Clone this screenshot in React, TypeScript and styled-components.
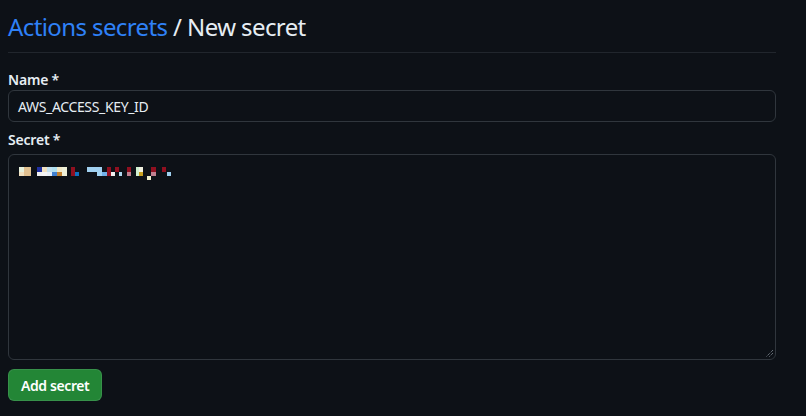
import styled, { createGlobalStyle } from 'styled-components';

const GlobalStyle = createGlobalStyle`
	html, body {
		margin: 0;
		padding: 0;
		background: #0d1117;
	}
	body {
		font-family: 'Noto Sans', 'Liberation Sans', sans-serif;
		color: #e6edf3;
	}
`;

const Page = styled.div`
	padding: 9px 30px 0 8px;
`;

const Header = styled.h2`
	margin: 0;
	padding-bottom: 7px;
	font-size: 24px;
	font-weight: 400;
	line-height: 36px;
	letter-spacing: -0.6px;
	border-bottom: 1px solid #21262d;
	color: #e6edf3;
`;

const Crumb = styled.a`
	color: #2f81f7;
	text-decoration: none;
`;

const Form = styled.form`
	display: flex;
	flex-direction: column;
	align-items: flex-start;
	padding-top: 17px;
`;

const Label = styled.label<{ $gap?: number }>`
	display: block;
	margin-top: ${(p) => p.$gap ?? 0}px;
	margin-bottom: ${(p) => (p.$gap ? 4 : 0)}px;
	font-size: 14px;
	font-weight: 600;
	line-height: 20px;
	letter-spacing: -0.2px;
`;

const Input = styled.div`
	box-sizing: border-box;
	width: 100%;
	height: 32px;
	padding: 0 12px 0 9px;
	display: flex;
	align-items: center;
	font-size: 14px;
	letter-spacing: -0.35px;
	border: 1px solid #30363d;
	border-radius: 6px;
	background: #0d1117;
`;

const TextArea = styled.div`
	position: relative;
	box-sizing: border-box;
	width: 100%;
	height: 206px;
	padding: 9px 10px;
	border: 1px solid #30363d;
	border-radius: 6px;
	background: #0d1117;
`;

const Grip = styled.svg`
	position: absolute;
	right: 1px;
	bottom: 1px;
`;

const Button = styled.button`
	margin-top: 9px;
	height: 32px;
	padding: 0 12px;
	font-family: inherit;
	font-size: 14px;
	font-weight: 600;
	letter-spacing: -0.4px;
	color: #ffffff;
	background: #238636;
	border: 1px solid rgba(240, 246, 252, 0.1);
	border-radius: 6px;
`;

// blurred secret value, [x, row, w, colour]
const cells: [number, number, number, string][] = [
	[2, 0, 5, '#e6f0dc'], [2, 1, 5, '#f0e0c0'], [7, 0, 7, '#e0c090'], [7, 1, 7, '#e0c090'],
	[20, 0, 5, '#2030a0'], [20, 1, 5, '#f0f0f0'], [25, 0, 5, '#f0e0c0'], [25, 1, 5, '#f4f4f4'],
	[30, 0, 5, '#c0e0f0'], [30, 1, 5, '#e8f0f8'], [35, 0, 5, '#b0e0f0'], [35, 1, 5, '#4080d0'],
	[40, 0, 5, '#f0e8c8'], [40, 1, 5, '#c08030'], [45, 0, 5, '#eef0d8'], [45, 1, 5, '#eef0d8'],
	[54, 0, 4, '#901020'], [54, 1, 4, '#901020'], [58, 1, 4, '#1070c0'],
	[70, 0, 15, '#a0d0f0'], [80, 1, 5, '#a0d0f0'], [85, 1, 5, '#70b0e8'],
	[90, 0, 4, '#901020'], [90, 1, 4, '#901020'], [94, 1, 4, '#f0f0f0'], [98, 0, 4, '#901020'],
	[102, 1, 3, '#b0d8f0'], [110, 0, 4, '#901020'], [110, 1, 4, '#c08090'],
	[119, 0, 3, '#d0f0d0'], [119, 1, 3, '#d0f0d0'], [122, 0, 4, '#f0f0e0'], [122, 1, 4, '#c8a020'],
	[130, 2, 4, '#f0f0d0'], [134, 0, 5, '#901020'], [134, 1, 5, '#c08090'],
	[145, 0, 4, '#901020'], [150, 1, 4, '#a0d0f0'],
];

const rowY = [3, 8, 12];

export default function App() {
	return (
		<>
			<GlobalStyle />
			<Page>
				<Header>
					<Crumb href="#">Actions secrets</Crumb> / New secret
				</Header>
				<Form>
					<Label>Name *</Label>
					<Input>AWS_ACCESS_KEY_ID</Input>
					<Label $gap={8}>Secret *</Label>
					<TextArea>
						<svg width="160" height="18" style={{ display: 'block', marginLeft: -2 }}>
							{cells.map(([x, r, w, c], i) => (
								<rect key={i} x={x} y={rowY[r]} width={w} height={r === 0 ? 5 : 4} fill={c} />
							))}
						</svg>
						<Grip width="10" height="10" viewBox="0 0 10 10">
							<path d="M9 2L2 9M9 5L5 9" stroke="#8b949e" strokeWidth="1" strokeDasharray="1 1" />
						</Grip>
					</TextArea>
					<Button type="button">Add secret</Button>
				</Form>
			</Page>
		</>
	);
}
